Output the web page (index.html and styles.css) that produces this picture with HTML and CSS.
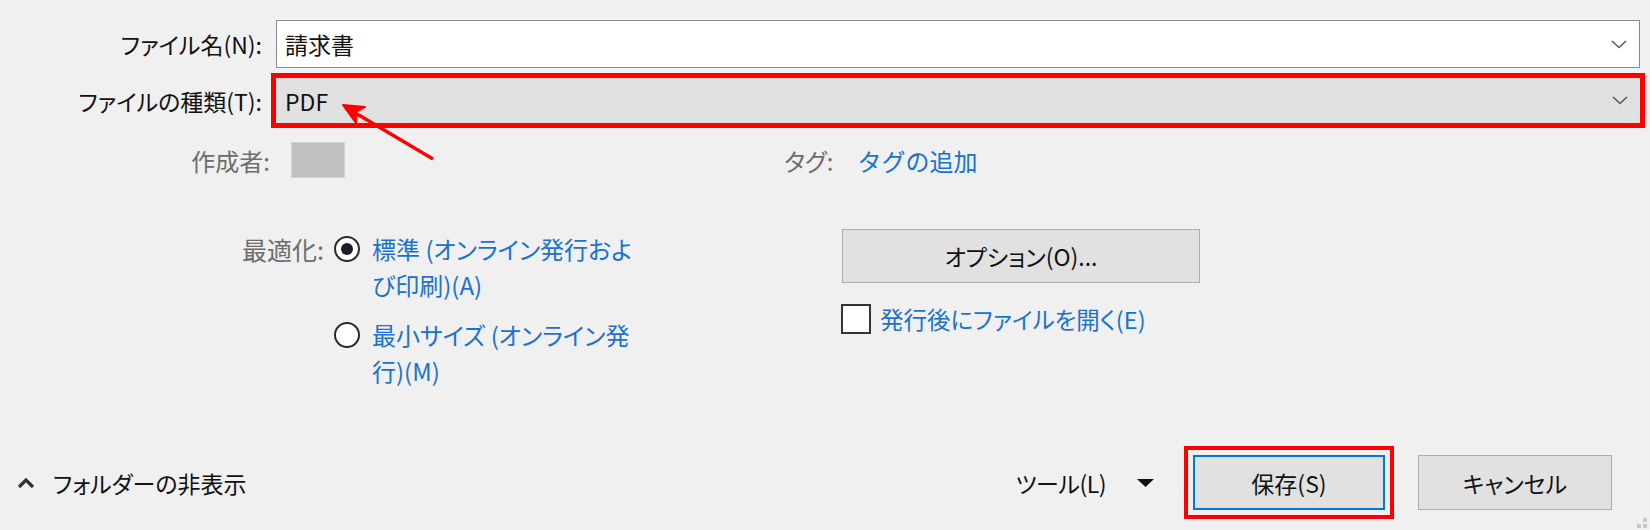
FILE: index.html
```html
<!DOCTYPE html>
<html>
<head>
	<meta charset="utf-8">
	<title>名前を付けて保存</title>
	<link rel="stylesheet" href="styles.css">
</head>
<body>
	<div class="dialog">
		<section class="fields">
			<div class="row">
				<label class="lbl">ファイル名(N):</label>
				<div class="combo edit">
					<span>請求書</span>
					<svg class="chev" width="16" height="9" viewBox="0 0 16 9"><path d="M1 1l7 6.5L15 1" fill="none" stroke="#5a5a5a" stroke-width="1.6"/></svg>
				</div>
			</div>
			<div class="row type-row">
				<label class="lbl">ファイルの種類(T):</label>
				<div class="combo type">
					<span>PDF</span>
					<svg class="chev" width="16" height="9" viewBox="0 0 16 9"><path d="M1 1l7 6.5L15 1" fill="none" stroke="#5a5a5a" stroke-width="1.6"/></svg>
				</div>
			</div>
			<div class="row meta">
				<span class="lbl dim">作成者:</span>
				<div class="meta-f">
					<span class="author"></span>
					<span class="tag-lbl dim">タグ:</span>
					<span class="link">タグの追加</span>
				</div>
			</div>
		</section>

		<section class="opts">
			<div class="opt-left">
				<span class="opt-lbl dim">最適化:</span>
				<div class="radios">
					<div class="radio-item">
						<span class="radio on"></span>
						<span class="link">標準 (オンライン発行およ<br>び印刷)(A)</span>
					</div>
					<div class="radio-item">
						<span class="radio"></span>
						<span class="link">最小サイズ (オンライン発<br>行)(M)</span>
					</div>
				</div>
			</div>
			<div class="opt-right">
				<div class="btn wide">オプション(O)...</div>
				<div class="check">
					<span class="box"></span>
					<span class="link">発行後にファイルを開く(E)</span>
				</div>
			</div>
		</section>

		<footer class="bar">
			<div class="folders">
				<svg width="20" height="12" viewBox="0 0 20 12"><path d="M3 10l7-7 7 7" fill="none" stroke="#333" stroke-width="3.2"/></svg>
				<span>フォルダーの非表示</span>
			</div>
			<div class="actions">
				<span class="tools">ツール(L)</span>
				<svg class="tri" width="17" height="8" viewBox="0 0 17 8"><path d="M0 0h17L8.5 8z" fill="#111"/></svg>
				<div class="btn save">保存(S)</div>
				<div class="btn">キャンセル</div>
			</div>
		</footer>

		<svg class="arrow" width="1650" height="530" viewBox="0 0 1650 530">
			<line x1="433" y1="159" x2="352" y2="111" stroke="#f00" stroke-width="3.2"/>
			<path d="M343 105L365 107L356 112L356 123z" fill="#f00" stroke="#f00" stroke-width="2" stroke-linejoin="round"/>
		</svg>
		<svg class="grip" width="12" height="12" viewBox="0 0 12 12">
			<rect x="7" y="1" width="4" height="4" fill="#c8c8c8"/>
			<rect x="7" y="7" width="4" height="4" fill="#c8c8c8"/>
			<rect x="1" y="7" width="4" height="4" fill="#c8c8c8"/>
		</svg>
	</div>
</body>
</html>
```

FILE: styles.css
```css
html, body{margin: 0; padding: 0; background: #f0f0f0;}

.dialog{position: relative;
		width: 1650px; height: 530px;
		box-sizing: border-box;
		padding-top: 20px;
		font-family: "Noto Sans CJK JP", "Noto Sans", sans-serif;
		font-feature-settings: "palt";
		font-size: 23px;
		color: #111;
		overflow: hidden;}

.row{display: grid;
	grid-template-columns: 262px 1364px;
	column-gap: 14px;
	align-items: center;}
.lbl{text-align: right; white-space: nowrap;}
.dim{color: #6d6d6d;}
.link{color: #1a72d0;}

.combo{display: flex; align-items: center; justify-content: space-between;
		box-sizing: border-box;
		padding: 0 10px 0 8px;}
.edit{height: 48px; background: #fff; border: 1px solid #8a8a8a;}
.type-row{margin-top: 10px;}
.type{height: 45px; background: #e1e1e1;
		outline: 5px solid #f00;
		padding-left: 9px;}
.chev{margin-right: 2px;}

.meta{margin-top: 19px;}
.meta .lbl{margin-right: -8px; font-size: 24px;}
.meta-f{display: flex; align-items: center;}
.author{width: 54px; height: 36px; box-sizing: border-box;
		margin-left: 15px;
		background: #c0c0c0; border: 1px solid #d4d4d4;}
.tag-lbl{margin-left: 439px; font-size: 24px;}
.meta-f .link{margin-left: 24px; font-size: 24px; font-feature-settings: normal;}

.opts{display: flex; margin-top: 51px;}
.opt-left{display: flex; width: 842px; flex: none;
		padding-top: 2px; line-height: 36px;}
.opt-lbl{width: 324px; text-align: right; font-size: 25px;}
.radios{margin-left: 10px;}
.radio-item{display: flex; align-items: flex-start;}
.radio-item + .radio-item{margin-top: 14px;}
.radio-item .link{font-size: 24px;}
.radio{width: 26px; height: 26px; box-sizing: border-box;
		margin-top: 5px; margin-right: 12px;
		border: 2px solid #2a2a2a; border-radius: 50%;
		background: #fff;
		display: flex; align-items: center; justify-content: center;}
.radio.on::after{content: ""; width: 12px; height: 12px; border-radius: 50%; background: #1c1c24;}

.btn{display: flex; align-items: center; justify-content: center;
	box-sizing: border-box;
	width: 194px; height: 55px;
	background: #e1e1e1; border: 1px solid #adadad;
	color: #111;}
.wide{width: 358px; height: 54px;}
.check{display: flex; align-items: center; margin-top: 19px;}
.check .link{font-size: 23.5px;}
.box{width: 30px; height: 30px; box-sizing: border-box;
	margin-left: -1px; margin-right: 9px;
	background: #fff; border: 2px solid #333;}

.bar{display: flex; justify-content: space-between; align-items: center;
	margin-top: 66px; height: 55px;
	padding: 0 38px 0 16px;}
.folders{display: flex; align-items: center; gap: 17px;}
.actions{display: flex; align-items: center;}
.tools{letter-spacing: -0.5px;}
.tri{margin-left: 31px; margin-right: 39px;}
.save{width: 192px; border: 2px solid #0078d7;
	outline: 4px solid #f00; outline-offset: 5px;
	margin-right: 33px;}

.arrow{position: absolute; left: 0; top: 0; pointer-events: none;}
.grip{position: absolute; right: 2px; bottom: 1px;}
```
